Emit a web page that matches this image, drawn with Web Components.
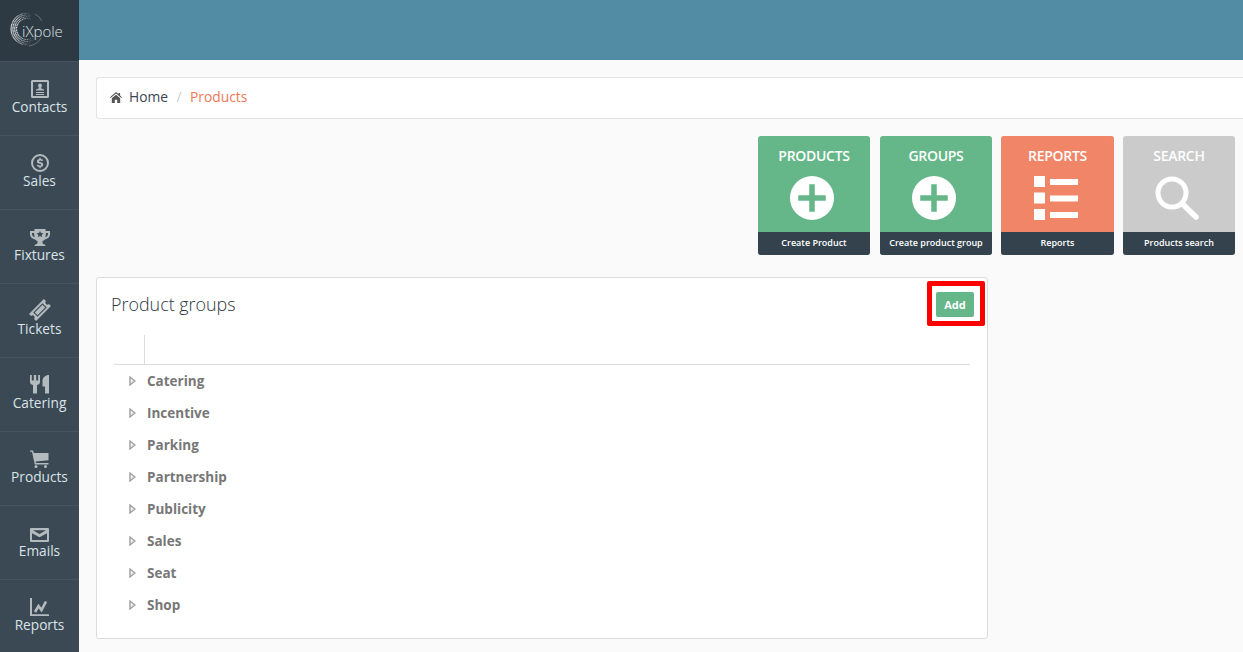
<!DOCTYPE html>
<html><head><meta charset="utf-8">
<style>
html,body{margin:0;height:652px;overflow:hidden;background:#fafafa;font-family:"Open Sans","Liberation Sans",sans-serif}
</style></head><body>
<app-shell>
<ix-logo slot="side"></ix-logo>
<nav-item slot="side" label="Contacts" icon="contacts"></nav-item>
<nav-item slot="side" label="Sales" icon="sales"></nav-item>
<nav-item slot="side" label="Fixtures" icon="fixtures"></nav-item>
<nav-item slot="side" label="Tickets" icon="tickets"></nav-item>
<nav-item slot="side" label="Catering" icon="catering"></nav-item>
<nav-item slot="side" label="Products" icon="products"></nav-item>
<nav-item slot="side" label="Emails" icon="emails"></nav-item>
<nav-item slot="side" label="Reports" icon="reports"></nav-item>
<bread-crumb></bread-crumb>
<tile-row>
<action-tile style="margin-right:1px" title-text="PRODUCTS" caption="Create Product" color="#65b688" icon="plus"></action-tile>
<action-tile title-text="GROUPS" caption="Create product group" color="#65b688" icon="plus"></action-tile>
<action-tile style="width:113px" title-text="REPORTS" caption="Reports" color="#f08567" icon="list"></action-tile>
<action-tile title-text="SEARCH" caption="Products search" color="#cbcbcb" icon="search"></action-tile>
</tile-row>
<group-panel heading="Product groups">
<tree-row>Catering</tree-row><tree-row>Incentive</tree-row><tree-row>Parking</tree-row><tree-row>Partnership</tree-row><tree-row>Publicity</tree-row><tree-row>Sales</tree-row><tree-row>Seat</tree-row><tree-row>Shop</tree-row>
</group-panel>
</app-shell>
<script>
const ICONS={
contacts:'<path fill-rule="evenodd" d="M1.500 0h15A1.500 1.500 0 0 1 18 1.500v15a1.500 1.500 0 0 1-1.500 1.500h-15A1.500 1.500 0 0 1 0 16.500v-15A1.500 1.500 0 0 1 1.500 0zM2 2v14h14V2z"/><circle cx="9" cy="5.600" r="2"/><path d="M7.800 7h2.400v1.500l2.800 1v1H5v-1l2.800-1zM5 12h8v1H5zM5 14h8v1H5z"/>',
sales:'<path fill-rule="evenodd" d="M9 0a9 9 0 1 1 0 18A9 9 0 0 1 9 0zm0 2a7 7 0 1 0 0 14A7 7 0 0 0 9 2z"/><path d="M8.300 3.800h1.400v1.300c1 .1 1.900.5 2.400 1l-.9 1.200c-.6-.5-1.300-.8-2-.8-.8 0-1.200.3-1.200.7 0 .5.600.7 1.600 1 1.400.4 2.700.9 2.700 2.500 0 1.200-.9 2.100-2.600 2.300v1.300H8.300v-1.300c-1.100-.1-2.100-.6-2.700-1.200l1-1.200c.6.600 1.500 1 2.400 1 .9 0 1.300-.3 1.300-.8s-.6-.7-1.500-1C7 9.400 5.900 8.900 5.900 7.400c0-1.200.9-2.100 2.400-2.300z"/>',
fixtures:'<path fill-rule="evenodd" d="M4.500 0h11v2H20v3c0 3-2.400 5-5.300 5.400-.6.800-1.300 1.400-2.200 1.700V14c0 .7.600 1 1.500 1.200.8.200 1.500.6 1.500 1.800H4.500c0-1.200.7-1.600 1.500-1.800.9-.2 1.500-.5 1.500-1.200v-1.900c-.9-.3-1.600-.9-2.200-1.700C2.400 10 0 8 0 5V2h4.500zM2 4v1c0 1.500 1 2.700 2.700 3.200C4.300 6.900 4.100 5.500 4.100 4zm13.900 0c0 1.500-.2 2.900-.6 4.200C17 7.700 18 6.500 18 5V4zM10 1.800l1 2.300 2.500.2-1.900 1.600.6 2.400L10 7l-2.200 1.300.6-2.400-1.900-1.600L9 4.100z"/>',
tickets:'<g transform="rotate(-45 10 10)"><path d="M-.5 5h21v2.900a2.100 2.100 0 0 0 0 4.200V15h-21v-2.900a2.100 2.100 0 0 0 0-4.200z"/><rect x="4" y="7.500" width="12" height="5" fill="none" stroke="#3a4953" stroke-width="1.100"/></g>',
catering:'<path d="M0 0h1.800v5.500h2V0h2.400v5.500h2V0H10v7c0 1.500-1 2.700-3 3V18.500H3V10C1 9.700 0 8.500 0 7z"/><path d="M19 0v18.500h-4v-7h-2.500V5.500C12.500 2.500 15.500 0 19 0z"/>',
products:'<path d="M0 .5h3l.8 2.500H18.500v7.300L5.600 11.500l.4 1.600h12.500v1.300H4.800L2 1.800H0z"/><circle cx="6" cy="16.500" r="1.500"/><circle cx="15.500" cy="16.500" r="1.500"/>',
emails:'<path fill-rule="evenodd" d="M1 0h17a1 1 0 0 1 1 1v12a1 1 0 0 1-1 1H1a1 1 0 0 1-1-1V1a1 1 0 0 1 1-1zM3 2.200l6.500 3.800L16 2.200zM2 5.200V12h15V5.200L9.500 9.300z"/>',
reports:'<path d="M0 0h2v16.200h17V18H0z"/><path d="M5 14l3.500-6 3 4 4.500-8.500" fill="none" stroke="#b4bbbf" stroke-width="2.600"/>'
};
class AppShell extends HTMLElement{constructor(){super();this.attachShadow({mode:'open'}).innerHTML=`<style>
:host{display:grid;grid-template-columns:79px 1fr;height:652px;overflow:hidden}
aside{background:#3a4953;display:flex;flex-direction:column;height:652px;overflow:hidden}
.main{min-width:0;display:flex;flex-direction:column}
.top{height:60px;background:#528ba4;flex:none}
.body{padding:17px 8px 0 17px;display:flex;flex-direction:column}
</style><aside><slot name="side"></slot></aside><div class="main"><div class="top"></div><div class="body"><slot></slot></div></div>`}}
customElements.define('app-shell',AppShell);
class IxLogo extends HTMLElement{constructor(){super();let dots='';
const radii=[10.500,12.300,14.100,15.900];
radii.forEach((R,r)=>{const n=Math.round(R*2.500);for(let i=0;i<n;i++){const t=i/(n-1);
const start=70+r*4,end=300-r*10;const a=(start+t*(end-start)+(r%2)*4)*Math.PI/180;
const x=(27+R*Math.cos(a)).toFixed(1),y=(29-R*Math.sin(a)).toFixed(1);
const fade=Math.sin(t*Math.PI);dots+=`<circle cx="${x}" cy="${y}" r="${(0.4+.32*fade).toFixed(2)}" opacity="${(.5+.5*fade).toFixed(2)}"/>`}});
this.attachShadow({mode:'open'}).innerHTML=`<style>
:host{display:block;height:61px;background:#2d3a43;position:relative;flex:none}
svg{position:absolute;left:0;top:0}
span{position:absolute;left:22px;top:21px;font:300 15px/20px "Open Sans",sans-serif;color:#dfe2e4}
</style><svg width="79" height="61" viewBox="0 0 79 61"><g fill="#dcdfe1">${dots}</g><path d="M35 14a17 17 0 0 1 7 7M41 38a17 17 0 0 1-12 8" fill="none" stroke="#8d959a" stroke-width=".6"/></svg><span>iXpole</span>`}}
customElements.define('ix-logo',IxLogo);
class NavItem extends HTMLElement{constructor(){super();const k=this.getAttribute('icon');
const s={contacts:[18,18,18,18],sales:[18,18,18,18],fixtures:[20,17,20,17],tickets:[20,20,20,20],catering:[19,19,19,19],products:[19,18,19,18],emails:[19,14,19,14],reports:[19,18,19,18]}[k];
this.attachShadow({mode:'open'}).innerHTML=`<style>
:host{display:block;height:74px;flex:none;box-sizing:border-box;border-top:1px solid #46545e;text-align:center}
.i{height:21px;margin-top:15px;display:flex;align-items:flex-end;justify-content:center}
svg{fill:#b4bbbf;display:block;overflow:visible}
.t{font:400 13.700px/19px "Open Sans",sans-serif;color:#dbe3e8;margin-top:-1px}
</style><div class="i"><svg width="${s[0]}" height="${s[1]}" viewBox="0 0 ${s[2]} ${s[3]}">${ICONS[k]}</svg></div><div class="t">${this.getAttribute('label')}</div>`}}
customElements.define('nav-item',NavItem);
class BreadCrumb extends HTMLElement{constructor(){super();this.attachShadow({mode:'open'}).innerHTML=`<style>
:host{display:flex;align-items:center;height:42px;box-sizing:border-box;background:#fff;border:1px solid #e5e5e5;border-right:0;border-radius:3px 0 0 3px;margin-right:-8px;padding:0 0 2px 13px;font:400 13.800px/20px "Open Sans",sans-serif;flex:none}
svg{fill:#555;margin-right:7px;display:block}
.h{color:#3a4550}.s{color:#c5ccd2;margin:0 8.500px}.c{color:#ee7858}
</style><svg width="12" height="11" viewBox="0 0 12 11"><path d="M6 0l2.400 2.100V1h1.700v2.600L12 5.300l-.6.700L6 1.400.6 6 0 5.300zM1.800 6.300L6 2.700l4.200 3.600V11H7.200V7.800H4.800V11h-3z"/></svg><span class="h">Home</span><span class="s">/</span><span class="c">Products</span>`}}
customElements.define('bread-crumb',BreadCrumb);
class TileRow extends HTMLElement{constructor(){super();this.attachShadow({mode:'open'}).innerHTML=`<style>:host{display:flex;justify-content:flex-end;gap:9px;margin-top:17px;flex:none}</style><slot></slot>`}}
customElements.define('tile-row',TileRow);
const TI={
plus:c=>`<svg width="44" height="44" viewBox="0 0 44 44"><circle cx="22" cy="22" r="22" fill="#fff"/><path d="M19.500 8.500h5.500v11h11v5.500h-11v11h-5.500v-11h-11v-5.500h11z" fill="${c}" transform="translate(-.25 -.25)"/></svg>`,
list:()=>`<svg width="44" height="44" viewBox="0 0 44 44" fill="#fff"><rect x="0" y="0" width="11" height="11"/><rect x="16" y="3" width="28" height="6"/><rect x="0" y="16.500" width="11" height="11"/><rect x="16" y="19.500" width="28" height="6"/><rect x="0" y="33" width="11" height="11"/><rect x="16" y="36" width="28" height="6"/></svg>`,
search:()=>`<svg width="44" height="44" viewBox="0 0 44 44" fill="none" stroke="#fff"><circle cx="17" cy="17" r="14" stroke-width="5"/><path d="M27.500 28L41 41" stroke-width="5.500" stroke-linecap="round"/></svg>`};
class ActionTile extends HTMLElement{constructor(){super();const c=this.getAttribute('color');this.attachShadow({mode:'open'}).innerHTML=`<style>
:host{display:flex;flex-direction:column;width:112px;height:119px;border-radius:3px;overflow:hidden;background:${c};text-align:center;color:#fff;flex:none}
.t{font:600 14px/20px "Open Sans",sans-serif;margin-top:10px;height:20px;letter-spacing:-.3px}
.g{flex:1;display:flex;justify-content:center;padding:10px 4px 0 0}
svg{display:block}
.b{height:23px;background:#33424d;font:600 9px/22px "Open Sans",sans-serif}
</style><div class="t">${this.getAttribute('title-text')}</div><div class="g">${TI[this.getAttribute('icon')](c)}</div><div class="b">${this.getAttribute('caption')}</div>`}}
customElements.define('action-tile',ActionTile);
class GroupPanel extends HTMLElement{constructor(){super();this.attachShadow({mode:'open'}).innerHTML=`<style>
:host{display:block;width:892px;height:362px;box-sizing:border-box;margin-top:22px;background:#fff;border:1px solid #dcdcdc;border-radius:3px;position:relative;padding:0 17px 0 17px;flex:none}
header{height:57px;display:flex;justify-content:space-between;align-items:flex-start}
h2{margin:13px 0 0 -3px;font:300 17.900px/26px "Open Sans",sans-serif;color:#2c3640}
button{margin:14px -4px 0 0;width:38px;height:25px;border:0;border-radius:2px;background:#65b688;color:#fff;font:700 11px/25px "Open Sans",sans-serif;padding:0}
.mark{position:absolute;left:830px;top:3px;width:48px;height:35px;border:5px solid #f00;border-radius:2px;pointer-events:none}
.th{height:29px;border-bottom:1px solid #dcdcdc}
.th i{display:block;width:1px;height:29px;background:#dcdcdc;margin-left:30px}
</style><header><h2>${this.getAttribute('heading')}</h2><button>Add</button></header><div class="mark"></div><div class="th"><i></i></div><div><slot></slot></div>`}}
customElements.define('group-panel',GroupPanel);
class TreeRow extends HTMLElement{constructor(){super();this.attachShadow({mode:'open'}).innerHTML=`<style>
:host{display:flex;align-items:center;height:32px;font:700 13.500px/20px "Open Sans",sans-serif;color:#777;padding-left:15px}
svg{display:block;margin-right:11px}
</style><svg width="7" height="10" viewBox="0 0 7 10"><path d="M1 1l5 4-5 4z" fill="#eee" stroke="#a0a0a0" stroke-width="1.400"/></svg><slot></slot>`}}
customElements.define('tree-row',TreeRow);
</script>
</body></html>
